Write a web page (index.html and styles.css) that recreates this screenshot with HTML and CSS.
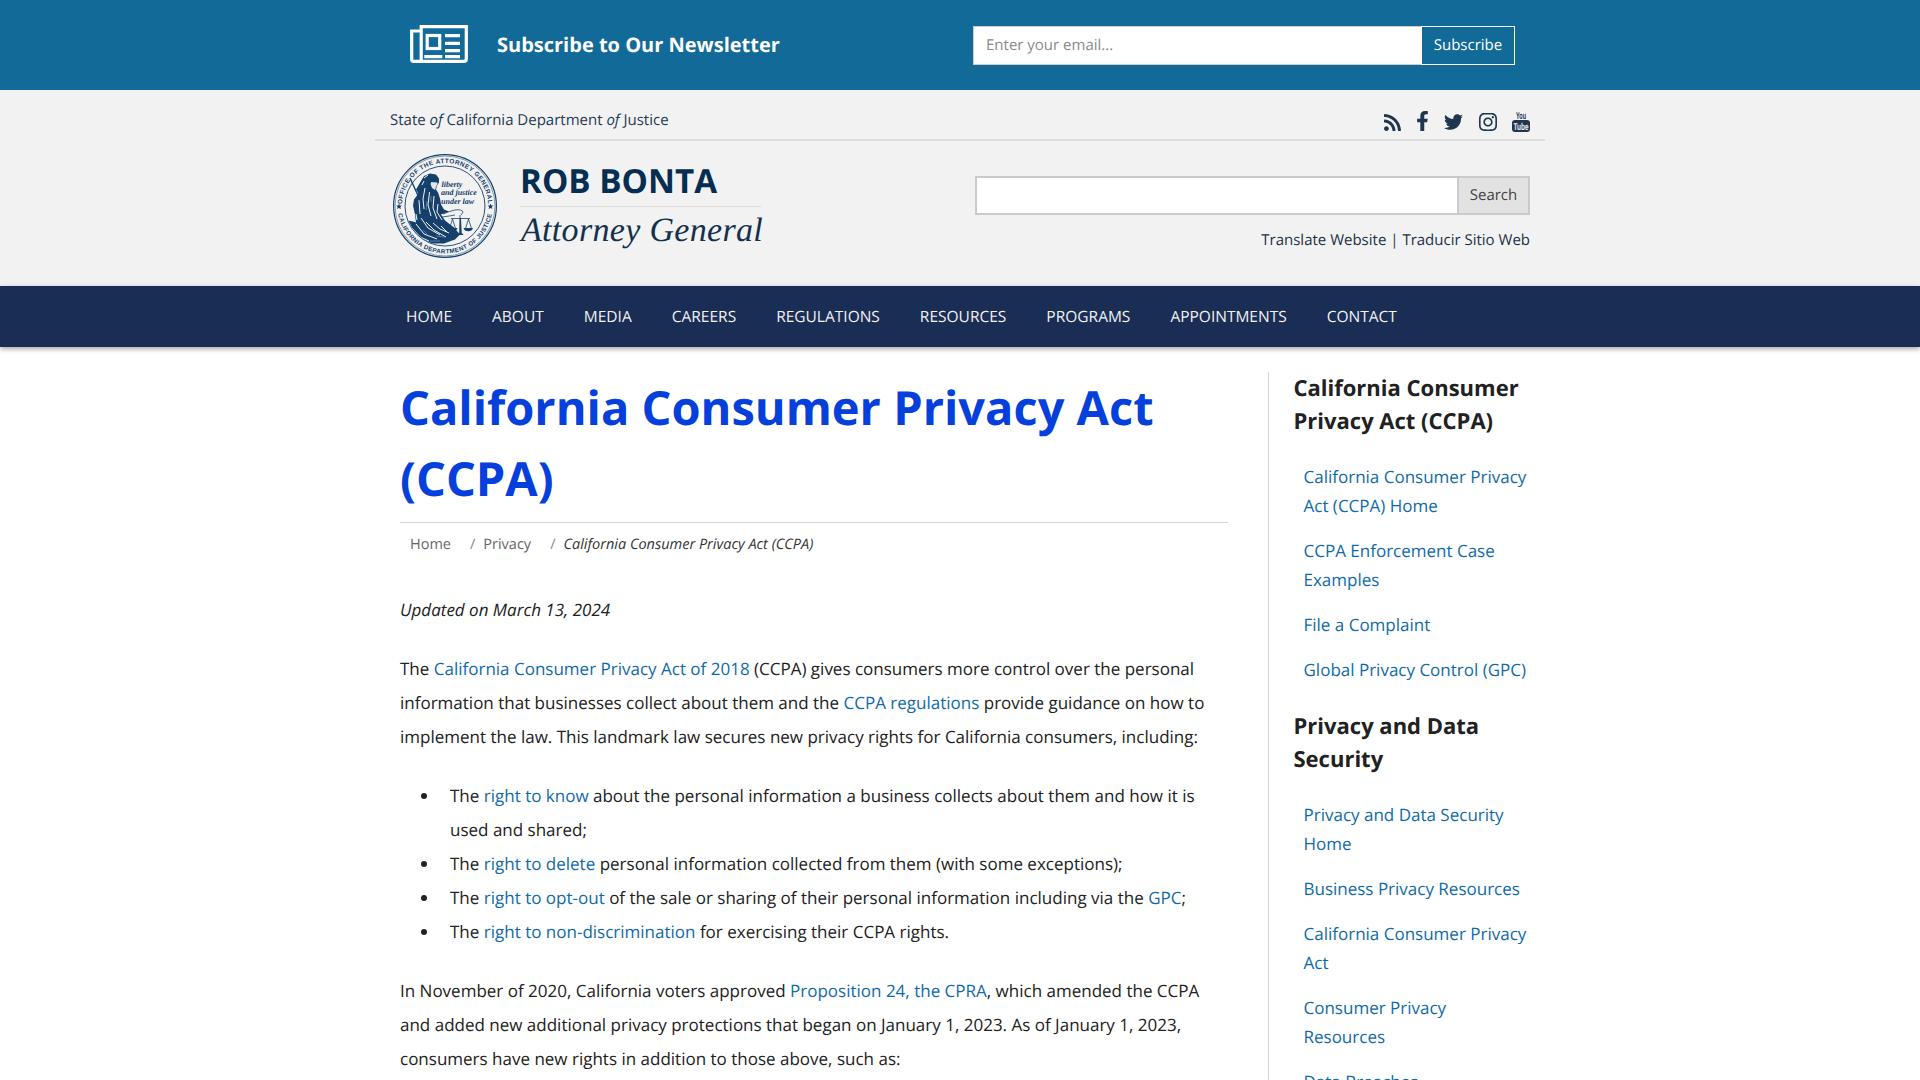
FILE: index.html
```html
<!DOCTYPE html>
<html lang="en">
<head>
<meta charset="utf-8">
<title>California Consumer Privacy Act (CCPA)</title>
<link rel="stylesheet" href="styles.css">
</head>
<body>
<section class="newsletter">
  <div class="newsletter-inner">
    <svg class="news-icon" viewBox="0 0 58 38" aria-hidden="true">
      <path class="news-line" d="M11 6H1.700V34.500Q1.700 36.300 3.500 36.300H54Q56.300 36.300 56.300 34V1.700H11.200V34.500Q11.200 36.300 9.500 36.300"/>
      <rect class="news-line" x="17.200" y="10.500" width="12.500" height="13"/>
      <path class="news-fill" d="M35 9h15v3.300H35zM35 16.700h15V20H35zM35 24h15v3.300H35zM14.300 30h18v3.300h-18zM35 30h15v3.300H35z"/>
    </svg>
    <h2 class="news-title">Subscribe to Our Newsletter</h2>
    <form class="news-form">
      <input class="news-input" type="text" placeholder="Enter your email...">
      <button class="news-btn" type="button">Subscribe</button>
    </form>
  </div>
</section>

<header class="site-header">
  <div class="utility">
    <span>State <em>of</em> California Department <em>of</em> Justice</span>
    <div class="social">
      <svg class="ic ic-rss" viewBox="0 32 448 448"><path d="M128.081 415.959c0 35.369-28.672 64.041-64.041 64.041S0 451.328 0 415.959s28.672-64.041 64.041-64.041 64.04 28.673 64.04 64.041zm175.66 47.25c-8.354-154.6-132.185-278.587-286.95-286.95C7.656 175.765 0 183.105 0 192.253v48.069c0 8.415 6.49 15.472 14.887 16.018 111.832 7.284 201.473 96.702 208.772 208.772.547 8.397 7.604 14.887 16.018 14.887h48.069c9.149.001 16.489-7.655 15.995-16.79zm144.249.288C439.596 229.677 251.465 40.445 16.503 32.01 7.473 31.686 0 38.981 0 48.016v48.068c0 8.625 6.835 15.645 15.453 15.999 191.179 7.839 344.627 161.316 352.465 352.465.353 8.618 7.373 15.453 15.999 15.453h48.068c9.034-.001 16.329-7.474 16.005-16.504z"/></svg>
      <svg class="ic ic-fb" viewBox="22 0 276 512"><path d="M279.14 288l14.22-92.66h-88.91v-60.13c0-25.35 12.42-50.06 52.24-50.06h40.42V6.26S260.43 0 225.36 0c-73.22 0-121.08 44.38-121.08 124.72v70.62H22.89V288h81.39v224h100.17V288z"/></svg>
      <svg class="ic ic-tw" viewBox="0 48 512 416"><path d="M459.37 151.716c.325 4.548.325 9.097.325 13.645 0 138.72-105.583 298.558-298.558 298.558-59.452 0-114.68-17.219-161.137-47.106 8.447.974 16.568 1.299 25.34 1.299 49.055 0 94.213-16.568 130.274-44.832-46.132-.975-84.792-31.188-98.112-72.772 6.498.974 12.995 1.624 19.818 1.624 9.421 0 18.843-1.3 27.614-3.573-48.081-9.747-84.143-51.98-84.143-102.985v-1.299c13.969 7.797 30.214 12.67 47.431 13.319-28.264-18.843-46.781-51.005-46.781-87.391 0-19.492 5.197-37.36 14.294-52.954 51.655 63.675 129.3 105.258 216.365 109.807-1.624-7.797-2.599-15.918-2.599-24.04 0-57.828 46.782-104.934 104.934-104.934 30.213 0 57.502 12.67 76.67 33.137 23.715-4.548 46.456-13.32 66.599-25.34-7.798 24.366-24.366 44.833-46.132 58.127 21.117-2.273 41.584-8.122 60.426-16.243-14.292 20.791-32.161 39.308-52.628 54.253z"/></svg>
      <svg class="ic ic-ig" viewBox="0 32 448 448"><path d="M224.1 141c-63.6 0-114.9 51.3-114.9 114.9s51.3 114.9 114.9 114.9S339 319.5 339 255.9 287.7 141 224.1 141zm0 189.6c-41.1 0-74.7-33.5-74.7-74.7s33.5-74.7 74.7-74.7 74.7 33.5 74.7 74.7-33.6 74.7-74.7 74.7zm146.4-194.3c0 14.9-12 26.8-26.8 26.8-14.9 0-26.8-12-26.8-26.8s12-26.8 26.8-26.8 26.8 12 26.8 26.8zm76.1 27.2c-1.7-35.9-9.9-67.7-36.2-93.9-26.2-26.2-58-34.4-93.9-36.2-37-2.1-147.9-2.1-184.9 0-35.8 1.7-67.6 9.9-93.9 36.1s-34.4 58-36.2 93.9c-2.1 37-2.1 147.9 0 184.9 1.7 35.9 9.9 67.7 36.2 93.9s58 34.4 93.9 36.2c37 2.1 147.9 2.1 184.9 0 35.9-1.7 67.7-9.9 93.9-36.2 26.2-26.2 34.4-58 36.2-93.9 2.1-37 2.1-147.8 0-184.8zM398.8 388c-7.8 19.6-22.9 34.7-42.6 42.6-29.5 11.7-99.5 9-132.1 9s-102.7 2.6-132.1-9c-19.6-7.8-34.7-22.9-42.6-42.6-11.7-29.5-9-99.5-9-132.1s-2.6-102.7 9-132.1c7.8-19.6 22.9-34.7 42.6-42.6 29.5-11.7 99.5-9 132.1-9s102.7-2.6 132.1 9c19.6 7.8 34.7 22.9 42.6 42.6 11.7 29.5 9 99.5 9 132.1s2.7 102.7-9 132.1z"/></svg>
      <svg class="ic ic-yt" viewBox="0 0 18 22">
        <text class="yt-you" x="9" y="8.700" text-anchor="middle" textLength="10" lengthAdjust="spacingAndGlyphs">You</text>
        <rect class="yt-box" x="0" y="10" width="18" height="12" rx="3"/>
        <text class="yt-tube" x="9" y="19.800" text-anchor="middle" textLength="15" lengthAdjust="spacingAndGlyphs">Tube</text>
      </svg>
    </div>
  </div>
  <div class="brand-row">
    <div class="brand">
      <svg class="seal" viewBox="0 0 104 104" role="img" aria-label="Seal of the Office of the Attorney General">
        <defs>
          <path id="arcTop" d="M9 52A43 43 0 1 1 95 52"/>
          <path id="arcBot" d="M4.500 52A47.500 47.500 0 0 0 99.500 52"/>
          <clipPath id="inner"><circle cx="52" cy="52" r="39.400"/></clipPath>
        </defs>
        <circle class="seal-ring" cx="52" cy="52" r="51.400"/>
        <circle class="seal-ring thin" cx="52" cy="52" r="50"/>
        <circle class="seal-ring inner-ring" cx="52" cy="52" r="40"/>
        <text class="seal-txt seal-top"><textPath href="#arcTop" startOffset="50%" text-anchor="middle">OFFICE OF THE ATTORNEY GENERAL</textPath></text>
        <text class="seal-txt seal-bot"><textPath href="#arcBot" startOffset="50%" text-anchor="middle">CALIFORNIA DEPARTMENT OF JUSTICE</textPath></text>
        <path class="seal-fill" d="M6 49.500l.8 2 2.200.1-1.700 1.400.6 2.100-1.900-1.200-1.900 1.200.6-2.100-1.700-1.400 2.200-.1zM97.500 49.500l.8 2 2.200.1-1.700 1.400.6 2.100-1.900-1.200-1.900 1.200.6-2.100-1.700-1.400 2.200-.1z"/>
        <g clip-path="url(#inner)">
          <path class="seal-fill" d="M28 27l3-5 6-2.500 6 1 3 4 0 4-2 3-1 4 2 3 2 6 1 6 3 5 5 2-8 3 4 6 9 7 6 7-5 5-11 4-14 0-12-5-8-8-4-7 2-3 5 1 3 1-1-8-2-9 1-6 3-4 1-3-2-3z"/>
          <path class="seal-pale" d="M39 26l5 .5.500 3-1.500 3.500-1 3-3-2-1.500-4z"/>
          <path class="seal-fill" d="M36 25.500l9.500.5-.3 2.500-9.200-.5z"/>
          <path class="seal-light" d="M32 34l-2 11 1 10M36.500 38l-1.500 13 3 11M41 42l-1 12 4 11M45 50l-1 8 5 8M28 64l7 10 12 7M23 70l8 10 13 5M33 68l8 8 12 7M19 74l8 9 9 4M40 69l7 6 9 4M31 24l4-3M29 31l2-4M26 46l1 14M48 72l6 6M23 60l1 6"/>
          <path class="seal-thin" d="M43 82l9 1M37 87l10 0M34 47l-1 9M38 42l0 6M30 76l4 4"/>
        </g>
        <path class="seal-line thick" d="M17 24L28 48"/>
        <path class="seal-line" d="M50 60q7-3 12-4 7-1 8 2l-2 3M49 63q8-1 13-2"/>
        <path class="seal-line" d="M67 61v3M58 64.500h19M59.500 65l-3 9.500M59.500 65l3 9.500M75.500 65l-3 9.500M75.500 65l3 9.500"/>
        <path class="seal-fill" d="M55 74h9.500q-1 3.200-4.750 3.200T55 74zM70.500 74h9.500q-1 3.200-4.750 3.200T70.500 74zM66.500 64h1.500l.7 15 2 2h-6.500l2-2z"/>
        <text class="seal-motto" x="48.500" y="32.500">liberty</text>
        <text class="seal-motto" x="48" y="41">and justice</text>
        <text class="seal-motto" x="48" y="49.500">under law</text>
      </svg>
      <div class="brand-text">
        <div class="brand-name">ROB BONTA</div>
        <div class="brand-role">Attorney General</div>
      </div>
    </div>
    <div class="search-col">
      <form class="search-form">
        <input class="search-input" type="text" aria-label="Search">
        <button class="search-btn" type="button">Search</button>
      </form>
      <div class="translate"><a href="#">Translate Website</a> | <a href="#">Traducir Sitio Web</a></div>
    </div>
  </div>
</header>

<nav class="main-nav">
  <ul class="nav-list">
    <li><a href="#">HOME</a></li>
    <li><a href="#">ABOUT</a></li>
    <li><a href="#">MEDIA</a></li>
    <li><a href="#">CAREERS</a></li>
    <li><a href="#">REGULATIONS</a></li>
    <li><a href="#">RESOURCES</a></li>
    <li><a href="#">PROGRAMS</a></li>
    <li><a href="#">APPOINTMENTS</a></li>
    <li><a href="#">CONTACT</a></li>
  </ul>
</nav>

<div class="page">
  <main class="content">
    <h1 class="title">California Consumer Privacy Act (CCPA)</h1>
    <ol class="crumbs">
      <li class="crumb"><a href="#">Home</a></li>
      <li class="crumb sep"><a href="#">Privacy</a></li>
      <li class="crumb sep current">California Consumer Privacy Act (CCPA)</li>
    </ol>
    <p class="updated"><em>Updated on March 13, 2024</em></p>
    <p>The <a href="#">California Consumer Privacy Act of 2018</a> (CCPA) gives consumers more control over the personal information that businesses collect about them and the <a href="#">CCPA regulations</a> provide guidance on how to implement the law. This landmark law secures new privacy rights for California consumers, including:</p>
    <ul class="rights">
      <li>The <a href="#">right to know</a> about the personal information a business collects about them and how it is used and shared;</li>
      <li>The <a href="#">right to delete</a> personal information collected from them (with some exceptions);</li>
      <li>The <a href="#">right to opt-out</a> of the sale or sharing of their personal information including via the <a href="#">GPC</a>;</li>
      <li>The <a href="#">right to non-discrimination</a> for exercising their CCPA rights.</li>
    </ul>
    <p>In November of 2020, California voters approved <a href="#">Proposition 24, the CPRA</a>, which amended the CCPA and added new additional privacy protections that began on January 1, 2023. As of January 1, 2023, consumers have new rights in addition to those above, such as:</p>
  </main>
  <aside class="sidebar">
    <h3 class="side-head">California Consumer Privacy Act (CCPA)</h3>
    <ul class="side-list">
      <li><a href="#">California Consumer Privacy Act (CCPA) Home</a></li>
      <li><a href="#">CCPA Enforcement Case Examples</a></li>
      <li><a href="#">File a Complaint</a></li>
      <li><a href="#">Global Privacy Control (GPC)</a></li>
    </ul>
    <h3 class="side-head">Privacy and Data Security</h3>
    <ul class="side-list">
      <li><a href="#">Privacy and Data Security Home</a></li>
      <li><a href="#">Business Privacy Resources</a></li>
      <li><a href="#">California Consumer Privacy Act</a></li>
      <li><a href="#">Consumer Privacy Resources</a></li>
      <li><a href="#">Data Breaches</a></li>
    </ul>
  </aside>
</div>
</body>
</html>
```
FILE: styles.css
```css
* { box-sizing: border-box; }
html, body { height: 100%; overflow: hidden; }
body { margin: 0; background: #fff; color: #212121; font-family: "Open Sans", "Liberation Sans", sans-serif; font-size: 17px; line-height: 34px; text-rendering: geometricPrecision; }
a { color: #0f6aa8; text-decoration: none; }

.newsletter { background: #126a99; height: 90px; }
.newsletter-inner { width: 1170px; margin: 0 auto; height: 100%; display: flex; align-items: center; padding-left: 35px; padding-right: 30px; }
.news-icon { width: 58px; height: 38px; flex: none; margin-top: -3px; }
.news-line { fill: none; stroke: #fff; stroke-width: 3.200; }
.news-fill { fill: #fff; }
.news-title { margin: 0 0 0 29px; color: #fff; font-size: 20px; font-weight: 700; line-height: 1; flex: none; }
.news-form { display: flex; margin-left: auto; height: 39px; }
.news-input { width: 448px; height: 39px; border: 1px solid #ccc; border-right: 0; padding: 0 11px 1px 12px; font: 15px "Open Sans", sans-serif; background: #fff; color: #333; border-radius: 0; text-rendering: geometricPrecision; }
.news-input::placeholder { color: #8a8a8a; opacity: 1; }
.news-btn { width: 94px; height: 39px; border: 1px solid #fff; background: #126a99; color: #fff; font: 15px "Open Sans", sans-serif; padding: 0 0 1px; border-radius: 0; text-rendering: geometricPrecision; }

.site-header { background: #f2f2f2; height: 196px; color: #1f3a57; }
.utility { width: 1170px; margin: 0 auto; height: 51px; border-bottom: 2px solid #dcdcdc; display: flex; justify-content: space-between; align-items: center; padding: 11px 15px 0; font-size: 15px; line-height: 20px; }
.social { display: flex; align-items: center; margin-top: 1px; }
.ic { display: block; fill: #1f3550; overflow: visible; }
.ic-rss { width: 17px; height: 17px; margin-top: 3px; }
.ic-fb { width: 11px; height: 20px; margin-left: 16px; }
.ic-tw { width: 19px; height: 16px; margin-left: 16px; margin-top: 2px; }
.ic-ig { width: 18px; height: 18px; margin-left: 16px; margin-top: 2px; }
.ic-yt { width: 18px; height: 22px; margin-left: 15px; margin-top: 1px; }
.yt-you { font: 700 10px "Liberation Sans Narrow", "Liberation Sans", sans-serif; fill: #1f3550; }
.yt-box { fill: #1f3550; }
.yt-tube { font: 700 10px "Liberation Sans Narrow", "Liberation Sans", sans-serif; fill: #f2f2f2; }

.brand-row { width: 1170px; margin: 0 auto; display: flex; justify-content: space-between; padding: 0 15px 0 18px; }
.brand { display: flex; align-items: flex-start; padding-top: 13px; }
.seal { width: 104px; height: 104px; flex: none; }
.seal-ring { fill: none; stroke: #14406b; stroke-width: 1.200; }
.seal-ring.thin { stroke-width: .5; }
.seal-ring.inner-ring { stroke-width: .9; }
.seal-txt { font-family: "Liberation Sans", sans-serif; font-weight: 700; fill: #14406b; }
.seal-top { font-size: 6.400px; letter-spacing: .45px; }
.seal-bot { font-size: 6.200px; letter-spacing: .4px; }
.seal-fill { fill: #14406b; }
.seal-pale { fill: #dfe6ed; }
.seal-light { fill: none; stroke: #f2f2f2; stroke-width: 1; }
.seal-thin { fill: none; stroke: #8da6bf; stroke-width: .6; }
.seal-line { fill: none; stroke: #14406b; stroke-width: .8; }
.seal-line.thick { stroke-width: 1.400; }
.seal-motto { font: italic 700 8px "Liberation Serif", serif; fill: #14406b; }
.brand-text { margin-left: 23px; width: 241px; }
.brand-name { font-size: 33.200px; font-weight: 700; line-height: 54px; color: #062d52; height: 53px; border-bottom: 1px solid #dcdcdc; white-space: nowrap; }
.brand-role { font: italic 400 34px/48px "Liberation Serif", serif; color: #12314f; letter-spacing: .32px; white-space: nowrap; padding-left: 1px; }
.search-col { width: 555px; padding-top: 35px; }
.search-form { display: flex; height: 39px; }
.search-input { flex: 1; height: 39px; border: 2px solid #cacaca; border-right: 0; background: #fff; border-radius: 0; }
.search-btn { width: 73px; height: 39px; border: 2px solid #cacaca; background: #e2e2e2; color: #444; font: 15px "Open Sans", sans-serif; padding: 0 0 2px; border-radius: 0; text-rendering: geometricPrecision; }
.translate { text-align: right; font-size: 15px; line-height: 20px; margin-top: 15px; }
.translate a { color: #1f3047; }

.main-nav { background: #1a2e55; height: 61px; box-shadow: 0 2px 5px rgba(0,0,0,.35); position: relative; }
.nav-list { list-style: none; width: 1170px; margin: 0 auto; padding: 0 0 2px 11px; display: flex; height: 100%; align-items: center; }
.nav-list a { display: block; padding: 0 20px; color: #f2f2f2; font-size: 15.500px; line-height: 20px; }

.page { width: 1170px; margin: 0 auto; display: grid; grid-template-columns: 893px 277px; padding-top: 25px; }
.content { padding: 0 40px 0 25px; }
.title { margin: 0; color: #0540dc; font-size: 47px; font-weight: 700; line-height: 71px; padding-bottom: 8px; border-bottom: 1px solid #d5d5d5; }
.crumbs { list-style: none; margin: 0; padding: 12px 0 0 10px; display: flex; font-size: 14.500px; line-height: 20px; color: #333; }
.crumb a { color: #666; }
.crumb.sep { margin-left: 19px; }
.crumb.sep::before { content: "/"; color: #888; margin-right: 8px; }
.crumb.current { font-style: italic; }
.crumb.current::before { font-style: normal; }
.content p { margin-bottom: 25px; margin-top: 25px; }
.content .updated { margin-top: 0; padding-top: 38px; }
.rights { margin: 25px 0; padding-left: 50px; list-style: none; }
.rights li { position: relative; }
.rights li::before { content: ""; position: absolute; left: -29px; top: 14px; width: 6px; height: 6px; border-radius: 50%; background: #212121; }
.sidebar { border-left: 1px solid #d5d5d5; padding: 0 15px 0 24.500px; }
.side-head { margin: 0; font-size: 22px; line-height: 33px; font-weight: 700; color: #212121; }
.side-list { list-style: none; margin: 0 0 26px; padding: 8px 0 0 10px; font-size: 17px; line-height: 29px; }
.side-list li { margin-top: 16px; }
```
